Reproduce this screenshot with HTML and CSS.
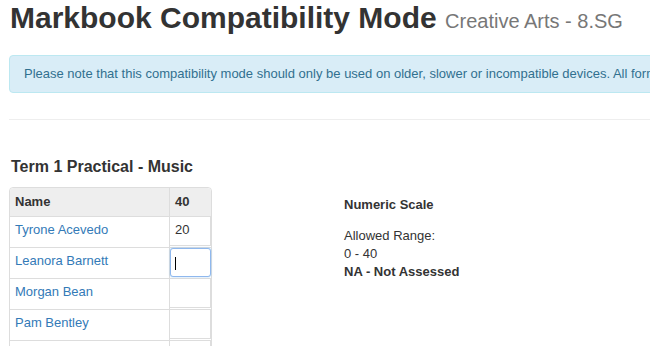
FILE: index.html
```html
<!DOCTYPE html>
<html lang="en">
<head>
    <meta charset="UTF-8">
    <meta name="viewport" content="width=device-width, initial-scale=1.0">
    <title>Markbook Compatibility Mode</title>
    <link rel="stylesheet" href="styles.css">
</head>
<body>
    <div class="page">
        <h1>Markbook Compatibility Mode <small>Creative Arts - 8.SG</small></h1>
        <div class="alert">Please note that this compatibility mode should only be used on older, slower or incompatible devices. All formatting and conditional highlighting has been disabled.</div>
        <hr>
        <div class="task">
            <div class="task-left">
                <h3>Term 1 Practical - Music</h3>
                <table class="marks">
                    <tr>
                        <th class="name">Name</th>
                        <th class="mark-head">40</th>
                    </tr>
                    <tr>
                        <td class="name"><a href="#">Tyrone Acevedo</a></td>
                        <td class="mark"><input type="text" value="20"></td>
                    </tr>
                    <tr>
                        <td class="name"><a href="#">Leanora Barnett</a></td>
                        <td class="mark"><span class="caret-wrap"><input type="text" class="active" value=""></span></td>
                    </tr>
                    <tr>
                        <td class="name"><a href="#">Morgan Bean</a></td>
                        <td class="mark"><input type="text" value=""></td>
                    </tr>
                    <tr>
                        <td class="name"><a href="#">Pam Bentley</a></td>
                        <td class="mark"><input type="text" value=""></td>
                    </tr>
                    <tr>
                        <td class="name"><a href="#">Kai Blackwell</a></td>
                        <td class="mark"><input type="text" value=""></td>
                    </tr>
                </table>
            </div>
            <div class="scale">
                <h4>Numeric Scale</h4>
                <p>Allowed Range:<br>0 - 40<br><b>NA - Not Assessed</b></p>
            </div>
        </div>
    </div>
</body>
</html>
```

FILE: styles.css
```css
body {
    margin: 0;
    padding: 0;
    overflow: hidden;
    font-family: "Liberation Sans", Arial, sans-serif;
    font-size: 13px;
    line-height: 18px;
    color: #333;
}
.page {
    width: 1100px;
    padding: 0 9px;
}
h1 {
    margin: 0;
    font-size: 30px;
    line-height: 36px;
    font-weight: bold;
    color: #333;
    padding-left: 1px;
}
h1 small {
    font-size: 20px;
    line-height: 1;
    font-weight: normal;
    color: #777;
}
.alert {
    margin-top: 19px;
    padding: 9px 14px;
    border: 1px solid #bce8f1;
    border-radius: 4px;
    background: #d9edf7;
    color: #31708f;
    white-space: nowrap;
}
hr {
    margin: 26px 0 0;
    border: 0;
    border-top: 1px solid #eee;
}
.task {
    display: flex;
    margin-top: 37px;
}
h3 {
    margin: 0 0 10px;
    padding-left: 2px;
    font-size: 16px;
    line-height: 20px;
    font-weight: bold;
}
.marks {
    border: 1px solid #ddd;
    border-radius: 4px 4px 0 0;
    border-spacing: 0;
    border-collapse: separate;
    width: 203px;
}
.marks th, .marks td {
    border-top: 1px solid #ddd;
    padding: 0 5px;
    height: 30px;
    text-align: left;
    font-size: 13px;
}
.marks th {
    border-top: 0;
    height: 28px;
    background: #eee;
    font-weight: bold;
}
.marks th.name {
    border-top-left-radius: 4px;
}
.marks th.mark-head {
    border-top-right-radius: 4px;
    border-left: 1px solid #ddd;
}
.marks td.name {
    vertical-align: top;
}
.marks td.mark {
    width: 40px;
    padding: 0;
    border-left: 1px solid #ddd;
    vertical-align: top;
}
.marks a {
    display: block;
    margin-top: 4px;
    color: #337ab7;
    text-decoration: none;
}
.marks input {
    display: block;
    box-sizing: border-box;
    width: 41px;
    height: 29px;
    margin: 0;
    padding: 0 5px 3px;
    border: 1px solid #ddd;
    border-left: 0;
    border-top: 0;
    font-family: "Liberation Sans", Arial, sans-serif;
    font-size: 13px;
    color: #333;
    background: #fff;
    outline: none;
}
.marks input.active {
    border: 1px solid #8fb8ee;
    border-radius: 3px;
    box-shadow: 0 0 2px rgba(102, 175, 233, 0.6);
}
.caret-wrap {
    position: relative;
    display: block;
}
.caret-wrap::after {
    content: "";
    position: absolute;
    left: 5px;
    top: 9px;
    width: 1px;
    height: 13px;
    background: #000;
}
.scale {
    margin-left: 132px;
    padding-top: 39px;
}
h4 {
    margin: 0 0 13px;
    font-size: 13px;
    line-height: 18px;
    font-weight: bold;
}
.scale p {
    margin: 0;
}
```
